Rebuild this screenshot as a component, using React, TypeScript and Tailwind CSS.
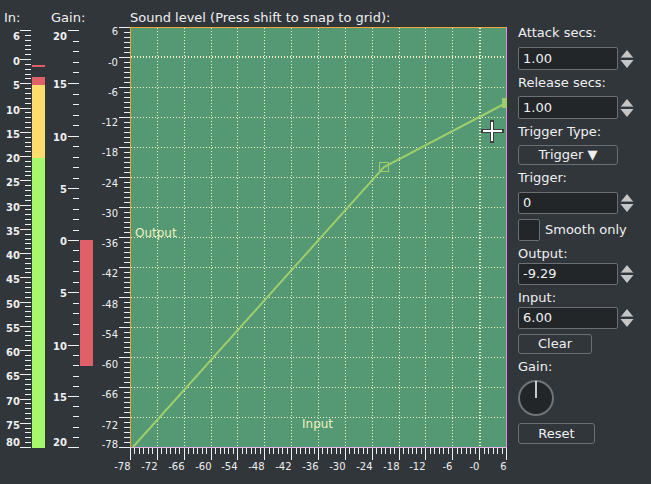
import type { ReactNode } from "react";

const FONT = "'DejaVu Sans', 'Liberation Sans', sans-serif";
const FG = "#eff0f1";

// transfer plot area in page pixels
const PX0 = 130;
const PX1 = 506;
const PY0 = 27;
const PY1 = 447;
const xOf = (db: number) => PX0 + ((db + 78) * (PX1 - PX0)) / 84;
const yOf = (db: number) => PY0 + (6 - db) * 5;

const range = (a: number, b: number, step = 1) => {
  const out: number[] = [];
  for (let v = a; v <= b; v += step) out.push(v);
  return out;
};

const dbLabel = (db: number) => (db === 0 ? "-0" : String(db));

function InMeter() {
  const y = (v: number) => Math.round(30 + ((v + 6) * 417) / 86) + 0.5;
  const majors = [-6, ...range(0, 80, 5)];
  return (
    <svg width={47} height={458} viewBox="0 26 47 458">
      <g shapeRendering="crispEdges">
        {range(-6, 80).map((v) => (
          <line
            key={v}
            x1={majors.includes(v) ? 20 : 25}
            x2={31}
            y1={y(v)}
            y2={y(v)}
            stroke={FG}
          />
        ))}
        <rect x={32} y={65} width={13} height={2} fill="#e0606a" />
        <rect x={32} y={77} width={13} height={8} fill="#e0606a" />
        <rect x={32} y={85} width={13} height={73} fill="#fddc6d" />
        <rect x={32} y={158} width={13} height={290} fill="#a6f76b" />
      </g>
      {majors.map((v) => (
        <text
          key={v}
          x={20}
          y={v === -6 ? 39.5 : v === 80 ? 446 : Math.round(y(v)) + 5}
          textAnchor="end"
          fontFamily={FONT}
          fontWeight="bold"
          fontSize={10}
          fill={FG}
        >
          {Math.abs(v)}
        </text>
      ))}
    </svg>
  );
}

const GAIN_MAJOR = [30, 83, 136, 188, 240, 292, 345, 396, 447];
const GAIN_LABELS = [20, 15, 10, 5, 0, 5, 10, 15, 20];

function GainMeter() {
  const minors: number[] = [];
  for (let i = 0; i < GAIN_MAJOR.length - 1; i++) {
    const a = GAIN_MAJOR[i];
    const b = GAIN_MAJOR[i + 1];
    for (let k = 1; k < 5; k++) minors.push(Math.round(a + ((b - a) * k) / 5));
  }
  return (
    <svg width={48} height={458} viewBox="47 26 48 458">
      <g shapeRendering="crispEdges" stroke={FG}>
        {GAIN_MAJOR.map((y) => (
          <line key={`M${y}`} x1={68} x2={79} y1={y + 0.5} y2={y + 0.5} />
        ))}
        {minors.map((y) => (
          <line key={`m${y}`} x1={73} x2={79} y1={y + 0.5} y2={y + 0.5} />
        ))}
      </g>
      <rect x={80} y={240} width={13} height={126} fill="#e0606a" shapeRendering="crispEdges" />
      {GAIN_MAJOR.map((y, i) => (
        <text
          key={i}
          x={67}
          y={i === 0 ? 40 : i === GAIN_MAJOR.length - 1 ? 446 : y + 5}
          textAnchor="end"
          fontFamily={FONT}
          fontWeight="bold"
          fontSize={10}
          fill={FG}
        >
          {GAIN_LABELS[i]}
        </text>
      ))}
    </svg>
  );
}

function TransferPlot() {
  const grid = range(-72, -6, 6);
  const knee = { x: 384, y: 167 };
  const end = { x: 506, y: 103 };
  return (
    <svg width={417} height={458} viewBox="95 26 417 458">
      <g shapeRendering="crispEdges">
        <rect x={PX0} y={PY0} width={PX1 - PX0} height={PY1 - PY0} fill="#549874" />
        {grid.map((db) => (
          <line
            key={`v${db}`}
            x1={Math.round(xOf(db)) + 0.5}
            x2={Math.round(xOf(db)) + 0.5}
            y1={PY0 + 1}
            y2={PY1}
            stroke="#f6f5c8"
            strokeDasharray="1 2"
          />
        ))}
        {grid.map((db) => (
          <line
            key={`h${db}`}
            x1={PX0 + 1}
            x2={PX1}
            y1={yOf(db) + 0.5}
            y2={yOf(db) + 0.5}
            stroke="#f6f5c8"
            strokeDasharray="1 2"
          />
        ))}
        {/* 0 dB lines are drawn heavier */}
        <line x1={480} x2={480} y1={PY0 + 1} y2={PY1} stroke="#f8f7cc" strokeWidth={2} strokeDasharray="1 2" />
        <line x1={PX0 + 1} x2={PX1} y1={57} y2={57} stroke="#f8f7cc" strokeWidth={2} strokeDasharray="1 2" />

        <line x1={PX0} x2={PX1} y1={PY0 + 0.5} y2={PY0 + 0.5} stroke="#f0a63c" />
        <line x1={PX0 + 0.5} x2={PX0 + 0.5} y1={PY0} y2={PY1} stroke="#f0a63c" />
        <line x1={PX1 + 0.5} x2={PX1 + 0.5} y1={PY0} y2={PY1 + 1} stroke="#e58fe6" />
        <line x1={PX0} x2={PX1 + 1} y1={PY1 + 0.5} y2={PY1 + 0.5} stroke="#e9b9ea" />

        {/* axis ticks */}
        {range(-78, 6).map((db) => {
          const major = db % 6 === 0;
          const y = yOf(db) + 0.5;
          const x = Math.round(xOf(db)) + 0.5;
          return (
            <g key={db} stroke={FG}>
              <line x1={major ? 119 : 124} x2={130} y1={y} y2={y} />
              <line x1={x} x2={x} y1={448} y2={major ? 460 : 454} />
            </g>
          );
        })}
      </g>

      <polyline
        points={`133,447 ${knee.x},${knee.y} ${end.x},${end.y}`}
        fill="none"
        stroke="#9dce6d"
        strokeWidth={2}
      />
      <rect x={knee.x - 4.5} y={knee.y - 4.5} width={9} height={9} fill="none" stroke="#9dce6d" />
      <rect x={502} y={98} width={5} height={10} fill="#9dce6d" />

      {range(-78, 6, 6).map((db) => (
        <text
          key={`yl${db}`}
          x={118}
          y={db === -78 ? 448 : Math.round(126 + ((-12 - db) / 6) * 30.25)}
          textAnchor="end"
          fontFamily={FONT}
          fontSize={10}
          fill={FG}
        >
          {dbLabel(db)}
        </text>
      ))}
      {range(-78, 6, 6).map((db) => (
        <text
          key={`xl${db}`}
          x={Math.round(xOf(db)) + 0.5}
          y={469.5}
          textAnchor="end"
          fontFamily={FONT}
          fontSize={10}
          fill={FG}
        >
          {dbLabel(db)}
        </text>
      ))}

      <text x={135} y={237} fontFamily={FONT} fontSize={12} fill="#eef1bf">
        Output
      </text>
      <text x={302} y={428} fontFamily={FONT} fontSize={12} fill="#eef1bf">
        Input
      </text>

      {/* pointer crosshair */}
      <g strokeLinecap="square" shapeRendering="crispEdges">
        <line x1={483} x2={502} y1={131} y2={131} stroke="#3b3f42" strokeWidth={4} />
        <line x1={492} x2={492} y1={122} y2={141} stroke="#3b3f42" strokeWidth={4} />
        <line x1={484} x2={501} y1={131} y2={131} stroke="#ffffff" strokeWidth={2} />
        <line x1={492} x2={492} y1={123} y2={140} stroke="#ffffff" strokeWidth={2} />
      </g>
    </svg>
  );
}

function SpinArrows() {
  return (
    <svg width={15} height={20} className="ml-[2px] shrink-0">
      <polygon points="0.5,9 7,1 13.5,9" fill="#c3c5c7" />
      <rect x={1} y={8} width={12} height={1} fill="#85888b" />
      <rect x={1} y={11} width={12} height={1} fill="#85888b" />
      <polygon points="0.5,11 7,19 13.5,11" fill="#c3c5c7" />
    </svg>
  );
}

function SpinBox({ value, className, h }: { value: string; className: string; h: string }) {
  return (
    <div className={`flex items-center ${className}`}>
      <div
        className={`flex w-[100px] items-center rounded-[2px] border border-[#6c7074] bg-[#232629] pl-[4px] ${h}`}
      >
        {value}
      </div>
      <SpinArrows />
    </div>
  );
}

function Label({ children, className }: { children: ReactNode; className: string }) {
  return <div className={`h-4 leading-4 ${className}`}>{children}</div>;
}

function PanelButton({ children, className }: { children: ReactNode; className: string }) {
  return (
    <div
      className={`flex items-center justify-center rounded-[3px] border border-[#6c7074] bg-[#31363b] ${className}`}
    >
      {children}
    </div>
  );
}

export default function App() {
  return (
    <div className="flex h-[484px] w-[651px] overflow-hidden bg-[#31363b] font-['DejaVu_Sans',sans-serif] text-[13px] text-[#eff0f1]">
      {/* input level meter */}
      <div className="flex w-[47px] flex-col">
        <div className="h-[26px] pl-[4px] pt-[10px] leading-4">In:</div>
        <InMeter />
      </div>

      {/* gain meter */}
      <div className="flex w-[48px] flex-col">
        <div className="h-[26px] pl-[4px] pt-[10px] leading-4">Gain:</div>
        <GainMeter />
      </div>

      {/* transfer curve */}
      <div className="flex w-[417px] flex-col">
        <div className="h-[26px] pl-[35px] pt-[10px] leading-4 whitespace-nowrap">
          Sound level (Press shift to snap to grid):
        </div>
        <TransferPlot />
      </div>

      {/* settings panel */}
      <div className="flex flex-col pl-[6px] pt-[25px]">
        <Label className="">Attack secs:</Label>
        <SpinBox value="1.00" className="mt-[6px]" h="h-[23px]" />
        <Label className="mt-[5px]">Release secs:</Label>
        <SpinBox value="1.00" className="mt-[5px]" h="h-[23px]" />
        <Label className="mt-[5px]">Trigger Type:</Label>
        <PanelButton className="mt-[5px] h-[20px] w-[100px]">Trigger ▼</PanelButton>
        <Label className="mt-[5px]">Trigger:</Label>
        <SpinBox value="0" className="mt-[6px]" h="h-[22px]" />
        <div className="mt-[5px] flex items-center gap-[5px]">
          <div className="h-[22px] w-[22px] rounded-[2px] border border-[#6c7074] bg-[#232629]" />
          <span className="leading-4">Smooth only</span>
        </div>
        <Label className="mt-[5px]">Output:</Label>
        <SpinBox value="-9.29" className="mt-[1px]" h="h-[22px]" />
        <Label className="mt-[5px]">Input:</Label>
        <SpinBox value="6.00" className="mt-[1px]" h="h-[22px]" />
        <PanelButton className="mt-[5px] h-[20px] w-[74px]">Clear</PanelButton>
        <Label className="mt-[5px]">Gain:</Label>
        <svg width={38} height={38} className="mt-[4px]">
          <circle cx={18} cy={19} r={17} fill="#232629" stroke="#6f7477" strokeWidth={2} />
          <line x1={18} x2={18} y1={2} y2={19} stroke="#ffffff" strokeWidth={1.5} />
        </svg>
        <PanelButton className="mt-[6px] h-[21px] w-[77px]">Reset</PanelButton>
      </div>
    </div>
  );
}
